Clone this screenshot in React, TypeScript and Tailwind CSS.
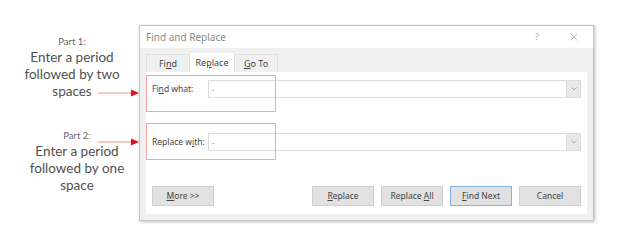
import React from 'react';

const u = (s: string) => <span className="underline underline-offset-1">{s}</span>;

function Arrow() {
  return (
    <svg width="41" height="8" viewBox="0 0 41 8" className="block">
      <line x1="0" y1="4" x2="34" y2="4" stroke="#f48a8a" strokeWidth="1.2" />
      <polygon points="33,0.5 41,4 33,7.5" fill="#e81010" />
    </svg>
  );
}

function Btn({ children, primary }: { children: React.ReactNode; primary?: boolean }) {
  return (
    <div
      className={`w-[62px] h-[20px] flex items-center justify-center text-[8.5px] text-[#444] bg-[#e1e1e1] border ${
        primary ? 'border-[#7eb4ea]' : 'border-[#d0d0d0]'
      }`}
    >
      <span>{children}</span>
    </div>
  );
}

function Combo() {
  return (
    <div className="flex-1 h-[18px] border border-[#dadada] bg-white flex items-center">
      <span className="flex-1 pl-[3px] text-[8px] leading-none text-[#555] -mt-[3px]">.</span>
      <div className="w-[14px] h-full bg-[#e8e8e8] border-l border-[#dadada] flex items-center justify-center">
        <svg width="6" height="4" viewBox="0 0 6 4">
          <polyline points="0.5,0.5 3,3 5.5,0.5" fill="none" stroke="#999" strokeWidth="0.8" />
        </svg>
      </div>
    </div>
  );
}

export default function App() {
  return (
    <div
      className="w-[625px] h-[250px] bg-white flex overflow-hidden"
      style={{ fontFamily: '"Noto Sans", "Open Sans", sans-serif' }}
    >
      {/* annotations */}
      <div
        className="w-[139px] shrink-0 pt-[35px] flex flex-col relative text-[#505050]"
        style={{ fontFamily: 'Lato, "Open Sans", sans-serif' }}
      >
        <div className="ml-[10px] w-[124px] text-center">
          <div className="text-[9.5px] leading-[14px] text-[#666]">Part 1:</div>
          <div className="text-[13.5px] leading-[17px]">Enter a period</div>
          <div className="text-[13.5px] leading-[17px]">followed by two</div>
          <div className="text-[13.5px] leading-[17px]">spaces</div>
        </div>
        <div className="ml-[15px] w-[124px] mt-[29px] text-center">
          <div className="text-[9.5px] leading-[14px] text-[#666]">Part 2:</div>
          <div className="text-[13.5px] leading-[17px]">Enter a period</div>
          <div className="text-[13.5px] leading-[17px]">followed by one</div>
          <div className="text-[13.5px] leading-[17px]">space</div>
        </div>
        <div className="absolute left-[98px] top-[89px]">
          <Arrow />
        </div>
        <div className="absolute left-[98px] top-[138px]">
          <Arrow />
        </div>
      </div>

      {/* dialog */}
      <div className="mt-[25px] w-[455px] h-[196px] shrink-0 border border-[#c4c4c4] bg-[#f0f0f0] flex flex-col shadow-[1px_1px_3px_rgba(0,0,0,0.25)]">
        <div className="h-[22px] bg-white flex items-center pl-[6px] text-[10px] text-[#8a8a8a]">
          <span className="flex-1">Find and Replace</span>
          <span className="text-[9px] text-[#aaa] mr-[31px]">?</span>
          <svg width="8" height="8" viewBox="0 0 8 8" className="mr-[15px]">
            <path d="M0.5 0.5L7.5 7.5M7.5 0.5L0.5 7.5" stroke="#aaa" strokeWidth="0.8" />
          </svg>
        </div>
        <div className="flex-1 flex flex-col px-[6px] pt-[5px] pb-[6px]">
          <div className="flex items-end h-[19px] text-[9px] text-[#444]">
            <div className="w-[44px] h-[18px] border border-b-0 border-[#e0e0e0] flex items-center justify-center">
              <span>Fi{u('n')}d</span>
            </div>
            <div className="w-[44px] h-[19px] bg-white flex items-center justify-center">
              <span>Re{u('p')}lace</span>
            </div>
            <div className="w-[44px] h-[18px] border border-b-0 border-[#e0e0e0] flex items-center justify-center">
              <span>{u('G')}o To</span>
            </div>
          </div>
          <div className="flex-1 bg-white relative flex flex-col px-[6px] pt-[8px] pb-[8px] text-[8.5px] text-[#444]">
            <div className="flex items-center">
              <div className="w-[56px]">Fi{u('n')}d what:</div>
              <Combo />
            </div>
            <div className="flex items-center mt-[35px]">
              <div className="w-[56px]">Replace w{u('i')}th:</div>
              <Combo />
            </div>
            <div className="flex-1" />
            <div className="flex items-center">
              <Btn>{u('M')}ore &gt;&gt;</Btn>
              <div className="flex-1" />
              <div className="flex gap-[7px]">
                <Btn>{u('R')}eplace</Btn>
                <Btn>Replace {u('A')}ll</Btn>
                <Btn primary>{u('F')}ind Next</Btn>
                <Btn>Cancel</Btn>
              </div>
            </div>
            <div className="absolute left-0 top-[3px] w-[130px] h-[37px] border border-solid border-[#f7a5a5]" />
            <div className="absolute left-0 top-[51px] w-[130px] h-[37px] border border-solid border-[#f7a5a5]" />
          </div>
        </div>
      </div>
    </div>
  );
}
